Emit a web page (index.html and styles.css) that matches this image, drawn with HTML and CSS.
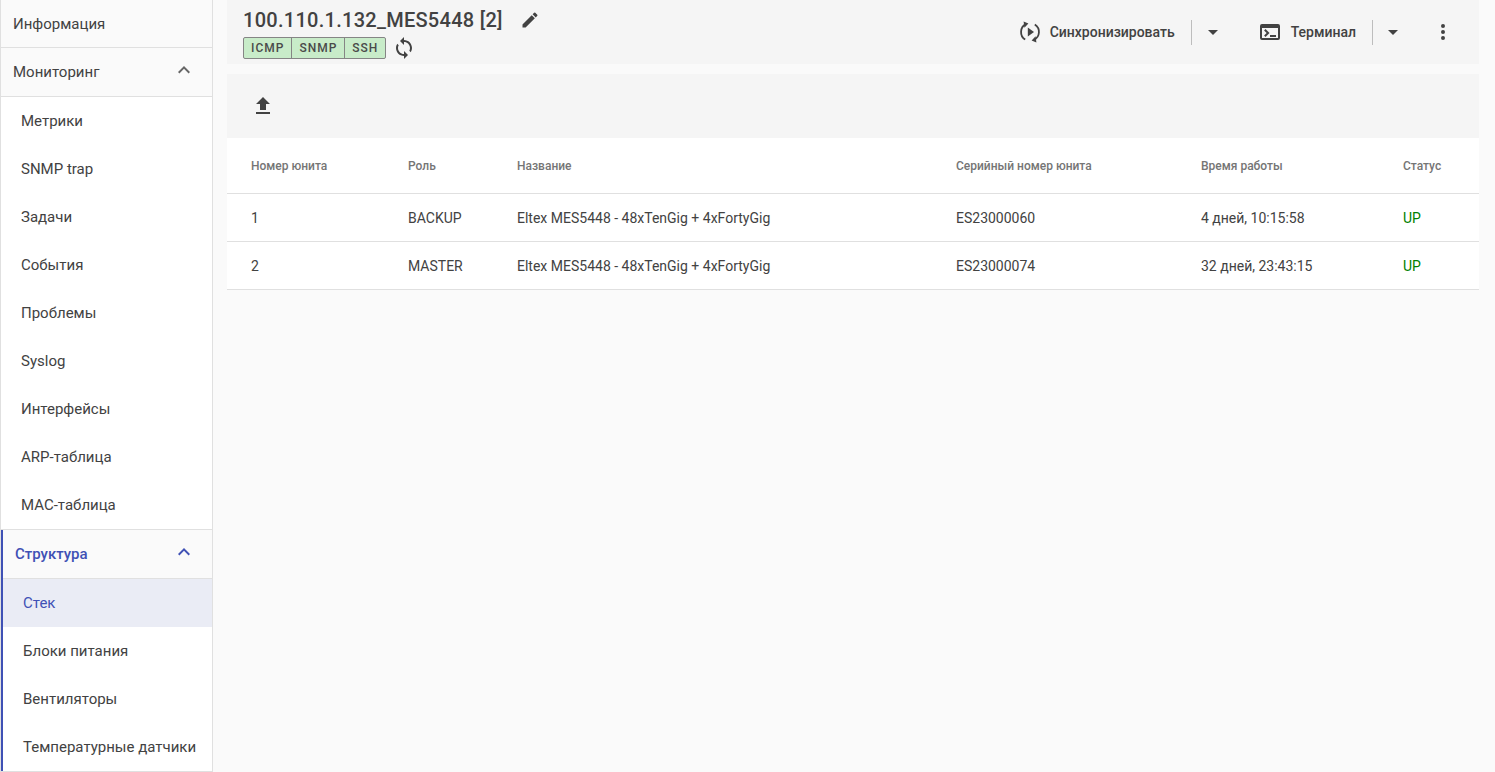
FILE: index.html
```html
<!DOCTYPE html>
<html lang="ru">
<head>
<meta charset="utf-8">
<title>Стек</title>
<link rel="stylesheet" href="styles.css">
</head>
<body>
<div class="app">
  <nav class="sidebar">
    <div class="item head">Информация</div>
    <div class="item head expand"><span>Мониторинг</span>
      <svg class="chev" viewBox="0 0 24 24"><path d="M12 8l-6 6 1.41 1.41L12 10.83l4.59 4.58L18 14z"/></svg></div>
    <div class="group">
      <div class="item sub">Метрики</div>
      <div class="item sub">SNMP trap</div>
      <div class="item sub">Задачи</div>
      <div class="item sub">События</div>
      <div class="item sub">Проблемы</div>
      <div class="item sub">Syslog</div>
      <div class="item sub">Интерфейсы</div>
      <div class="item sub">ARP-таблица</div>
      <div class="item sub">MAC-таблица</div>
    </div>
    <div class="active-group">
      <div class="item head expand active-head"><span>Структура</span>
        <svg class="chev" viewBox="0 0 24 24"><path d="M12 8l-6 6 1.41 1.41L12 10.83l4.59 4.58L18 14z"/></svg></div>
      <div class="item sub current">Стек</div>
      <div class="item sub">Блоки питания</div>
      <div class="item sub">Вентиляторы</div>
      <div class="item sub">Температурные датчики</div>
    </div>
  </nav>
  <main class="main">
    <header class="topbar">
      <div class="title-block">
        <div class="title-row">
          <h1 class="title">100.110.1.132_MES5448 [2]</h1>
          <svg class="icon edit" viewBox="0 0 24 24"><path d="M3 17.25V21h3.75L17.81 9.94l-3.75-3.75L3 17.25zM20.71 7.04a1 1 0 0 0 0-1.41l-2.34-2.34a1 1 0 0 0-1.41 0l-1.83 1.83 3.75 3.75 1.83-1.83z"/></svg>
        </div>
        <div class="badge-row">
          <div class="badges"><span class="badge">ICMP</span><span class="badge">SNMP</span><span class="badge">SSH</span></div>
          <svg class="icon sync" viewBox="0 0 24 24"><path d="M12 4V1L8 5l4 4V6c3.31 0 6 2.69 6 6 0 1.01-.25 1.97-.7 2.8l1.46 1.46A7.93 7.93 0 0 0 20 12c0-4.42-3.58-8-8-8zm0 14c-3.31 0-6-2.69-6-6 0-1.01.25-1.97.7-2.8L5.24 7.74A7.93 7.93 0 0 0 4 12c0 4.42 3.58 8 8 8v3l4-4-4-4v3z"/></svg>
        </div>
      </div>
      <div class="actions">
        <svg class="icon act-icon" viewBox="0 0 24 24"><path d="M9.8 16.5v-9l6.2 4.5z"/><path class="arc" d="M8.2 3.9A9 9 0 0 0 7.2 19.6M15.8 20.1A9 9 0 0 0 16.8 4.4"/><path d="M5.6 1.6l.8 6.2 4-4.4zM18.4 22.4l-.8-6.2-4 4.4z"/></svg>
        <span class="act-label">Синхронизировать</span>
        <span class="divider"></span>
        <svg class="icon caret" viewBox="0 0 24 24"><path d="M7 10l5 5 5-5z"/></svg>
        <svg class="icon act-icon" viewBox="0 0 24 24"><path d="M20 4H4a2 2 0 0 0-2 2v12a2 2 0 0 0 2 2h16a2 2 0 0 0 2-2V6a2 2 0 0 0-2-2zm0 14H4V8h16v10zm-2-1h-6v-2h6v2zM7.5 17l-1.41-1.41L8.67 13l-2.59-2.59L7.5 9l4 4-4 4z"/></svg>
        <span class="act-label term-label">Терминал</span>
        <span class="divider"></span>
        <svg class="icon caret caret-last" viewBox="0 0 24 24"><path d="M7 10l5 5 5-5z"/></svg>
        <svg class="icon more" viewBox="0 0 24 24"><path d="M12 8a2 2 0 1 0 0-4 2 2 0 0 0 0 4zm0 2a2 2 0 1 0 0 4 2 2 0 0 0 0-4zm0 6a2 2 0 1 0 0 4 2 2 0 0 0 0-4z"/></svg>
      </div>
    </header>
    <div class="toolbar">
      <svg class="icon upload" viewBox="0 0 24 24"><path d="M9 16h6v-6h4l-7-7-7 7h4zm-4 2h14v2H5z"/></svg>
    </div>
    <table class="table">
      <colgroup>
        <col class="c1"><col class="c2"><col class="c3"><col class="c4"><col class="c5"><col class="c6">
      </colgroup>
      <thead>
        <tr><th>Номер юнита</th><th>Роль</th><th>Название</th><th>Серийный номер юнита</th><th>Время работы</th><th>Статус</th></tr>
      </thead>
      <tbody>
        <tr><td>1</td><td>BACKUP</td><td>Eltex MES5448 - 48xTenGig + 4xFortyGig</td><td>ES23000060</td><td>4 дней, 10:15:58</td><td class="up">UP</td></tr>
        <tr><td>2</td><td>MASTER</td><td>Eltex MES5448 - 48xTenGig + 4xFortyGig</td><td>ES23000074</td><td>32 дней, 23:43:15</td><td class="up">UP</td></tr>
      </tbody>
    </table>
  </main>
</div>
</body>
</html>
```
FILE: styles.css
```css
* { box-sizing: border-box; }
html, body { margin: 0; height: 100%; overflow: hidden; }
body {
  font-family: Roboto, "Liberation Sans", sans-serif;
  font-size: 14px;
  color: #424242;
  background: #fafafa;
}
.app { display: flex; height: 772px; }

.sidebar {
  width: 213px;
  flex: none;
  height: 772px;
  background: #fff;
  border-left: 1px solid #e0e0e0;
  border-right: 1px solid #e0e0e0;
  border-bottom: 1px solid #e0e0e0;
  overflow: hidden;
  font-size: 15px;
}
.item { display: flex; align-items: center; height: 48px; line-height: 20px; }
.head {
  height: 48px;
  padding: 0 12px;
  background: #fafafa;
  border-bottom: 1px solid #e0e0e0;
}
.expand { height: 49px; justify-content: space-between; padding-right: 16px; }
.chev { width: 24px; height: 24px; fill: #666; margin-top: -5px; }
.sub { padding-left: 20px; }
.group { padding-bottom: 1px; border-bottom: 1px solid #e0e0e0; height: 433px; }
.active-group { border-left: 2px solid #3f51b5; }
.active-head { padding-left: 12px; color: #3f51b5; font-weight: 500; }
.active-head .chev { fill: #3f51b5; }
.current { background: #eaecf5; color: #3f51b5; }

.main { width: 1266px; padding-left: 14px; flex: none; }
.topbar {
  width: 1252px;
  height: 64px;
  background: #f5f5f5;
  display: flex;
  justify-content: space-between;
  padding-left: 16px;
}
.title-block { display: flex; flex-direction: column; }
.title-row { display: flex; align-items: center; height: 36px; padding-top: 4px; }
.title { margin: 0; font-size: 20px; font-weight: 500; line-height: 32px; letter-spacing: 0.275px; color: #424242; }
.icon { fill: #424242; color: #424242; flex: none; display: block; }
.edit { width: 20px; height: 20px; margin-left: 17px; }
.badge-row { display: flex; align-items: center; }
.badges {
  display: flex;
  height: 22px;
  background: #c8ecc9;
  border: 1px solid #858585;
  border-radius: 2px;
}
.badge {
  font-size: 12px;
  font-weight: 500;
  letter-spacing: 1px;
  line-height: 20px;
  padding: 0 7px;
  color: #4a4a4a;
  border-left: 1px solid #858585;
}
.badge:first-child { border-left: 0; }
.sync { width: 24px; height: 24px; margin-left: 6px; }

.actions { display: flex; align-items: center; height: 64px; }
.act-icon { width: 24px; height: 24px; }
.arc { fill: none; stroke: currentColor; stroke-width: 1.8; }
.act-label { font-size: 14px; font-weight: 500; margin-left: 8px; line-height: 20px; }
.term-label { margin-left: 9px; }
.divider { width: 1px; height: 25px; background: #bdbdbd; margin-left: 16px; }
.caret { width: 24px; height: 24px; margin-left: 9px; margin-right: 33px; }
.caret-last { margin-left: 8px; margin-right: 26px; }
.more { width: 24px; height: 24px; margin-right: 24px; }

.toolbar {
  width: 1252px;
  height: 64px;
  margin-top: 10px;
  background: #f5f5f5;
  display: flex;
  align-items: center;
  padding-left: 24px;
}
.upload { width: 24px; height: 24px; margin-top: -1px; }

.table {
  width: 1252px;
  table-layout: fixed;
  border-collapse: collapse;
  background: #fff;
}
.c1 { width: 181px; } .c2 { width: 109px; } .c3 { width: 439px; }
.c4 { width: 245px; } .c5 { width: 202px; } .c6 { width: 76px; }
th, td { text-align: left; padding: 1px 0 0 24px; border-bottom: 1px solid #e0e0e0; white-space: nowrap; }
th { height: 55px; font-size: 12px; font-weight: 500; color: #757575; }
td { height: 48px; font-size: 14px; color: #424242; }
th:nth-child(n+2), td:nth-child(n+2) { padding-left: 0; }
td.up { color: #008000; }
```
